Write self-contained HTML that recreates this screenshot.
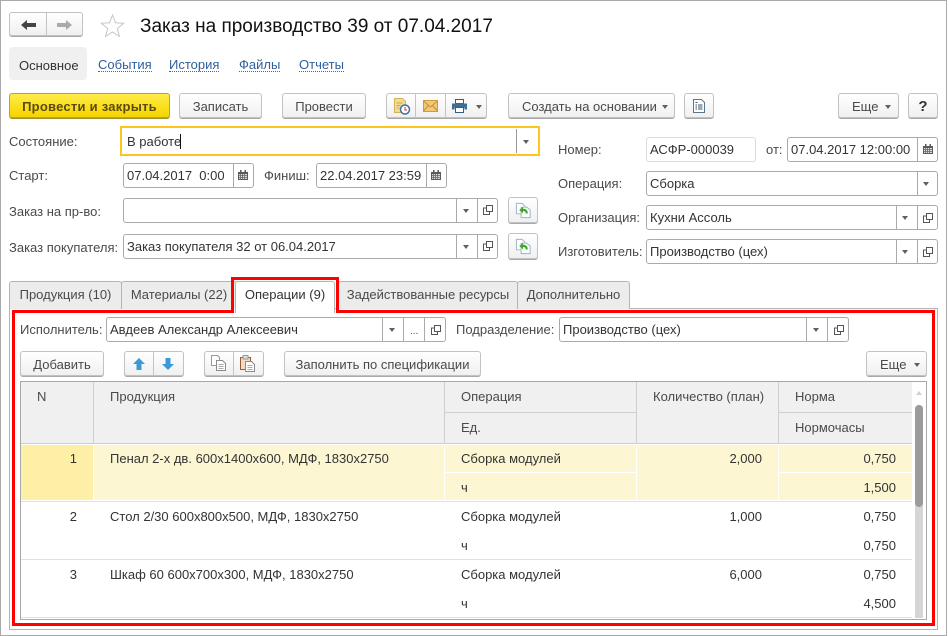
<!DOCTYPE html>
<html lang="ru"><head><meta charset="utf-8"><title>Заказ</title>
<style>
html,body{margin:0;padding:0;background:#fff}
#p{position:relative;width:949px;height:636px;overflow:hidden;background:#fff;font:13px/16px "Liberation Sans",Arial,sans-serif;color:#333}
#p div,#p svg{position:absolute;box-sizing:border-box}
.x{white-space:nowrap;font-size:13px;line-height:16px;height:16px;color:#333;margin-top:1px}
.l{color:#4a4a4a}
.lk{color:#2f5f9f;border-bottom:1px dotted #3a6aa8;height:14px;line-height:14px}
.b{background:linear-gradient(#fff,#f6f6f6 60%,#f0f0f0);border:1px solid #c2c2c2;border-radius:3px;box-shadow:0 1px 0 #a8a8a8;color:#4a4a4a;text-align:center;line-height:25px;font-size:13px;white-space:nowrap}
.f{background:#fff;border:1px solid #aaa;border-radius:3px}
.s{width:1px;background:#aaa}
.sb{width:1px;background:#c4c4c4}
.t{width:0;height:0;border-left:3.5px solid transparent;border-right:3.5px solid transparent;border-top:4px solid #606060}
.h{background:#f0f0f0}
.r{text-align:right}
.tab{background:#ececec;border:1px solid #b4b4b4;border-bottom:0;border-radius:3px 3px 0 0;text-align:center;line-height:26px;color:#4a4a4a;white-space:nowrap;font-size:13px}
</style></head><body><div id="p">
<svg width="0" height="0" style="left:0;top:0"><defs>
<symbol id="op" viewBox="0 0 10 10"><path d="M3.500 .5h6v6h-6z M3.500 3H.5v6.500h6V6.500" fill="none" stroke="#555" stroke-width="1"/></symbol>
<symbol id="cal" viewBox="0 0 10 10"><path d="M0 2h10v8H0z" fill="#5a5a5a"/><path d="M2 0h1.500v2H2zM6.500 0H8v2H6.500z" fill="#5a5a5a"/><path d="M1 4h8v5H1z" fill="#ddd"/><path d="M2.500 4v5M4.500 4v5M6.500 4v5M1 5.500h8M1 7.500h8" stroke="#666" stroke-width=".8"/></symbol>
<symbol id="bk" viewBox="0 0 20 20"><path d="M2.500 2.500h6l3 3v8h-9z" fill="#fff" stroke="#9db2c0"/><path d="M7.500 6.500h6l3.500 3v8h-9.500z" fill="#fff" stroke="#9db2c0"/><path d="M5.500 9.500l4-3.500v2.200c3 0 5 1.300 5 5h-2.200c0-1.800-.9-2.500-2.800-2.500v2.300z" fill="#3fa82e"/></symbol>
</defs></svg>

<!-- window border -->
<div style="left:0;top:0;width:947px;height:636px;border:1px solid #a9a9a9"></div>

<!-- nav -->
<div class="b" style="left:9px;top:12px;width:74px;height:24px"></div>
<div class="sb" style="left:46px;top:13px;height:22px"></div>
<svg style="left:21px;top:20px" width="15" height="10" viewBox="0 0 15 10"><path d="M6 0v3h9v4H6v3L0 5z" fill="#444"/></svg>
<svg style="left:57px;top:20px" width="15" height="10" viewBox="0 0 15 10"><path d="M9 0v3H0v4h9v3l6-5z" fill="#aaa"/></svg>
<svg style="left:100px;top:14px" width="25" height="23" viewBox="0 0 25 23"><path d="M12.500 1l3 7.800 8.200.5-6.400 5.200 2.200 8-7-4.500-7 4.500 2.200-8L1.300 9.300l8.200-.5z" fill="#fff" stroke="#c6c6c6"/></svg>
<div class="x" style="left:140px;top:14px;margin-top:2px;font-size:19px;line-height:22px;height:22px;color:#111">Заказ на производство 39 от 07.04.2017</div>

<!-- top tabs -->
<div style="left:9px;top:47px;width:78px;height:33px;background:#f0f0f0;border-radius:4px"></div>
<div class="x" style="left:19px;top:57px;color:#333">Основное</div>
<div class="x lk" style="left:98px;top:57px">События</div>
<div class="x lk" style="left:169px;top:57px">История</div>
<div class="x lk" style="left:239px;top:57px">Файлы</div>
<div class="x lk" style="left:299px;top:57px">Отчеты</div>

<!-- command bar -->
<div class="b" style="left:9px;top:93px;width:161px;height:25px;background:linear-gradient(#ffec4a,#fbe020 50%,#f5d400);border-color:#b5a240;box-shadow:0 1px 0 #a39030;color:#5a4a12;font-weight:bold;letter-spacing:.25px">Провести и закрыть</div>
<div class="b" style="left:179px;top:93px;width:83px;height:25px">Записать</div>
<div class="b" style="left:282px;top:93px;width:84px;height:25px">Провести</div>
<div class="b" style="left:386px;top:93px;width:101px;height:25px"></div>
<div class="sb" style="left:415px;top:94px;height:23px"></div>
<div class="sb" style="left:445px;top:94px;height:23px"></div>
<svg style="left:393px;top:98px" width="18" height="17" viewBox="0 0 18 17"><path d="M1.500 .5h8l3 3v11h-11z" fill="#f2dc94" stroke="#d4b45a"/><path d="M3.500 5h6M3.500 7.500h4M3.500 10h3" stroke="#c9a850"/><circle cx="12" cy="11.500" r="4.500" fill="#fff" stroke="#3d6fa8" stroke-width="1.500"/><path d="M12 9v3h2" stroke="#d04030" fill="none"/></svg>
<svg style="left:423px;top:100px" width="15" height="12" viewBox="0 0 15 12"><path d="M.5 .5h14v11H.5z" fill="#f3c877" stroke="#cf9a3e"/><path d="M.5 1l7 6 7-6M.5 11l5-5.500M14.500 11l-5-5.500" fill="none" stroke="#c78f35"/></svg>
<svg style="left:452px;top:99px" width="15" height="14" viewBox="0 0 15 14"><path d="M3.500 .5h8v4h-8z" fill="#fff" stroke="#2f5f85"/><path d="M0 4.500h15v6h-2.500v-2h-10v2H0z" fill="#3d6f95"/><path d="M3.500 8.500h8v5h-8z" fill="#fff" stroke="#2f5f85"/></svg>
<div class="t" style="left:476px;top:105px"></div>
<div class="b" style="left:508px;top:93px;width:167px;height:25px;text-align:left;padding-left:13px">Создать на основании</div>
<div class="t" style="left:662px;top:105px"></div>
<div class="b" style="left:684px;top:93px;width:30px;height:25px"></div>
<svg style="left:693px;top:99px" width="12" height="14" viewBox="0 0 12 14"><path d="M.5 .5h8l3 3v10H.5z" fill="#fff" stroke="#5d7488"/><path d="M2.500 3.500h2M2.500 6h1.500M5 6h4.500M2.500 8h1.500M5 8h4.500M2.500 10h1.500M5 10h4.500" stroke="#33536e"/></svg>
<div class="b" style="left:838px;top:93px;width:61px;height:25px;text-align:left;padding-left:13px">Еще</div>
<div class="t" style="left:885px;top:105px"></div>
<div class="b" style="left:908px;top:93px;width:30px;height:25px;color:#333;font-weight:bold;font-size:15px">?</div>

<!-- left fields -->
<div class="x l" style="left:9px;top:133px">Состояние:</div>
<div style="left:120px;top:126px;width:420px;height:30px;border:2px solid #fcc61c;background:#fff"></div>
<div class="x" style="left:127px;top:133px">В работе</div>
<div style="left:180px;top:134px;width:1px;height:15px;background:#111"></div>
<div class="s" style="left:516px;top:129px;height:24px;background:#999"></div>
<div class="t" style="left:523px;top:140px"></div>

<div class="x l" style="left:9px;top:167px">Старт:</div>
<div class="f" style="left:123px;top:163px;width:131px;height:25px"></div>
<div class="s" style="left:233px;top:164px;height:23px"></div>
<div class="x" style="left:127px;top:167px">07.04.2017&nbsp; 0:00</div>
<svg style="left:238px;top:170px" width="10" height="10"><use href="#cal"/></svg>
<div class="x l" style="left:264px;top:167px">Финиш:</div>
<div class="f" style="left:316px;top:163px;width:131px;height:25px"></div>
<div class="s" style="left:426px;top:164px;height:23px"></div>
<div class="x" style="left:320px;top:167px">22.04.2017 23:59</div>
<svg style="left:431px;top:170px" width="10" height="10"><use href="#cal"/></svg>

<div class="x l" style="left:9px;top:203px">Заказ на пр-во:</div>
<div class="f" style="left:123px;top:198px;width:375px;height:25px"></div>
<div class="s" style="left:456px;top:199px;height:23px"></div>
<div class="s" style="left:477px;top:199px;height:23px"></div>
<div class="t" style="left:463px;top:209px"></div>
<svg style="left:483px;top:205px" width="10" height="10"><use href="#op"/></svg>
<div class="b" style="left:508px;top:197px;width:30px;height:26px"></div>
<svg style="left:514px;top:201px" width="19" height="19"><use href="#bk"/></svg>

<div class="x l" style="left:9px;top:239px">Заказ покупателя:</div>
<div class="f" style="left:123px;top:234px;width:375px;height:25px"></div>
<div class="s" style="left:456px;top:235px;height:23px"></div>
<div class="s" style="left:477px;top:235px;height:23px"></div>
<div class="x" style="left:127px;top:238px">Заказ покупателя 32 от 06.04.2017</div>
<div class="t" style="left:463px;top:245px"></div>
<svg style="left:483px;top:241px" width="10" height="10"><use href="#op"/></svg>
<div class="b" style="left:508px;top:233px;width:30px;height:26px"></div>
<svg style="left:514px;top:237px" width="19" height="19"><use href="#bk"/></svg>

<!-- right fields -->
<div class="x l" style="left:558px;top:141px">Номер:</div>
<div style="left:646px;top:137px;width:110px;height:25px;border:1px solid #ddd;border-radius:3px"></div>
<div class="x" style="left:650px;top:141px">АСФР-000039</div>
<div class="x l" style="left:766px;top:141px">от:</div>
<div class="f" style="left:787px;top:137px;width:151px;height:25px"></div>
<div class="s" style="left:917px;top:138px;height:23px"></div>
<div class="x" style="left:791px;top:141px">07.04.2017 12:00:00</div>
<svg style="left:923px;top:144px" width="10" height="10"><use href="#cal"/></svg>

<div class="x l" style="left:558px;top:175px">Операция:</div>
<div class="f" style="left:646px;top:171px;width:292px;height:25px"></div>
<div class="s" style="left:917px;top:172px;height:23px"></div>
<div class="x" style="left:650px;top:175px">Сборка</div>
<div class="t" style="left:923px;top:182px"></div>

<div class="x l" style="left:558px;top:209px">Организация:</div>
<div class="f" style="left:646px;top:205px;width:292px;height:25px"></div>
<div class="s" style="left:896px;top:206px;height:23px"></div>
<div class="s" style="left:917px;top:206px;height:23px"></div>
<div class="x" style="left:650px;top:209px">Кухни Ассоль</div>
<div class="t" style="left:902px;top:216px"></div>
<svg style="left:923px;top:213px" width="10" height="10"><use href="#op"/></svg>

<div class="x l" style="left:558px;top:243px">Изготовитель:</div>
<div class="f" style="left:646px;top:239px;width:292px;height:25px"></div>
<div class="s" style="left:896px;top:240px;height:23px"></div>
<div class="s" style="left:917px;top:240px;height:23px"></div>
<div class="x" style="left:650px;top:243px">Производство (цех)</div>
<div class="t" style="left:902px;top:250px"></div>
<svg style="left:923px;top:247px" width="10" height="10"><use href="#op"/></svg>

<!-- tabs panel -->
<div style="left:9px;top:308px;width:929px;height:322px;border:1px solid #b4b4b4;background:#fff"></div>
<div class="tab" style="left:9px;top:281px;width:113px;height:28px">Продукция (10)</div>
<div class="tab" style="left:121px;top:281px;width:116px;height:28px">Материалы (22)</div>
<div class="tab" style="left:338px;top:281px;width:180px;height:28px">Задействованные ресурсы</div>
<div class="tab" style="left:517px;top:281px;width:113px;height:28px">Дополнительно</div>
<div class="tab" style="left:235px;top:281px;width:100px;height:32px;background:#fff;color:#333">Операции (9)</div>

<!-- red outline -->
<svg style="left:0;top:0" width="949" height="636"><path d="M13.500 311.500H232.500V278.500H337.500V311.500H933.500V624.500H13.500Z" fill="none" stroke="#f00" stroke-width="3"/></svg>

<!-- executor row -->
<div class="x l" style="left:20px;top:321px">Исполнитель:</div>
<div class="f" style="left:106px;top:317px;width:340px;height:25px"></div>
<div class="s" style="left:382px;top:318px;height:23px"></div>
<div class="s" style="left:403px;top:318px;height:23px"></div>
<div class="s" style="left:424px;top:318px;height:23px"></div>
<div class="x" style="left:110px;top:321px">Авдеев Александр Алексеевич</div>
<div class="t" style="left:389px;top:328px"></div>
<div class="x l" style="left:410px;top:323px;font-size:10px">...</div>
<svg style="left:431px;top:325px" width="10" height="10"><use href="#op"/></svg>
<div class="x l" style="left:456px;top:321px">Подразделение:</div>
<div class="f" style="left:559px;top:317px;width:290px;height:25px"></div>
<div class="s" style="left:806px;top:318px;height:23px"></div>
<div class="s" style="left:827px;top:318px;height:23px"></div>
<div class="x" style="left:563px;top:321px">Производство (цех)</div>
<div class="t" style="left:813px;top:328px"></div>
<svg style="left:834px;top:325px" width="10" height="10"><use href="#op"/></svg>

<!-- table toolbar -->
<div class="b" style="left:20px;top:351px;width:84px;height:25px">Добавить</div>
<div class="b" style="left:124px;top:351px;width:60px;height:25px"></div>
<div class="sb" style="left:153px;top:352px;height:23px"></div>
<svg style="left:133px;top:358px" width="12" height="12" viewBox="0 0 12 12"><path d="M6 0l6 6H8.500v6h-5V6H0z" fill="#3b9ad6"/></svg>
<svg style="left:162px;top:358px" width="12" height="12" viewBox="0 0 12 12"><path d="M6 12l6-6H8.500V0h-5v6H0z" fill="#3b9ad6"/></svg>
<div class="b" style="left:204px;top:351px;width:60px;height:25px"></div>
<div class="sb" style="left:233px;top:352px;height:23px"></div>
<svg style="left:211px;top:355px" width="16" height="16" viewBox="0 0 16 16"><path d="M.5 .5h6l2 2v8h-8z" fill="#fff" stroke="#9a9a9a"/><path d="M5.500 5.500h6l3 3v7h-9z" fill="#fff" stroke="#8a8a8a"/><path d="M7.500 9.500h5M7.500 11.500h5M7.500 13.500h5" stroke="#aaa"/></svg>
<svg style="left:240px;top:355px" width="16" height="17" viewBox="0 0 16 17"><path d="M.5 2.500h10v12H.5z" fill="#f0ddc8" stroke="#9a5a3a"/><path d="M3 .5h5v3.500H3z" fill="#ddd" stroke="#999"/><path d="M5.500 6.500h6l3 3v7h-9z" fill="#fff" stroke="#8a8a8a"/><path d="M7.500 10.500h5M7.500 12.500h5M7.500 14.500h5" stroke="#aaa"/></svg>
<div class="b" style="left:284px;top:351px;width:197px;height:25px">Заполнить по спецификации</div>
<div class="b" style="left:866px;top:351px;width:61px;height:25px;text-align:left;padding-left:13px">Еще</div>
<div class="t" style="left:914px;top:363px"></div>

<!-- table -->
<div style="left:20px;top:381px;width:907px;height:239px;border:1px solid #a8a8a8;background:#fff"></div>
<div class="h" style="left:21px;top:382px;width:72px;height:61px"></div>
<div class="h" style="left:94px;top:382px;width:350px;height:61px"></div>
<div class="h" style="left:445px;top:382px;width:191px;height:30px"></div>
<div class="h" style="left:445px;top:413px;width:191px;height:30px"></div>
<div class="h" style="left:637px;top:382px;width:141px;height:61px"></div>
<div class="h" style="left:779px;top:382px;width:133px;height:30px"></div>
<div class="h" style="left:779px;top:413px;width:133px;height:30px"></div>
<div style="left:21px;top:443px;width:891px;height:1px;background:#cfcfcf"></div>
<div style="left:93px;top:382px;width:1px;height:61px;background:#cfcfcf"></div>
<div style="left:444px;top:382px;width:1px;height:61px;background:#cfcfcf"></div>
<div style="left:636px;top:382px;width:1px;height:61px;background:#cfcfcf"></div>
<div style="left:778px;top:382px;width:1px;height:61px;background:#cfcfcf"></div>
<div style="left:445px;top:412px;width:191px;height:1px;background:#cfcfcf"></div>
<div style="left:779px;top:412px;width:133px;height:1px;background:#cfcfcf"></div>
<div class="x l" style="left:37px;top:388px">N</div>
<div class="x l" style="left:110px;top:388px">Продукция</div>
<div class="x l" style="left:461px;top:388px">Операция</div>
<div class="x l" style="left:461px;top:419px">Ед.</div>
<div class="x l" style="left:653px;top:388px">Количество (план)</div>
<div class="x l" style="left:795px;top:388px">Норма</div>
<div class="x l" style="left:795px;top:419px">Нормочасы</div>

<!-- rows -->
<div style="left:21px;top:445px;width:72px;height:55px;background:#fdf0a6"></div>
<div style="left:94px;top:445px;width:350px;height:55px;background:#fdf6d3"></div>
<div style="left:445px;top:445px;width:191px;height:27px;background:#fdf6d3"></div>
<div style="left:445px;top:473px;width:191px;height:27px;background:#fdf6d3"></div>
<div style="left:637px;top:445px;width:141px;height:55px;background:#fdf6d3"></div>
<div style="left:779px;top:445px;width:133px;height:27px;background:#fdf6d3"></div>
<div style="left:779px;top:473px;width:133px;height:27px;background:#fdf6d3"></div>
<div style="left:21px;top:501px;width:891px;height:1px;background:#e0e0e0"></div>
<div style="left:21px;top:559px;width:891px;height:1px;background:#e0e0e0"></div>
<div style="left:21px;top:617px;width:891px;height:1px;background:#e0e0e0"></div>

<div class="x r" style="left:37px;width:40px;top:450px">1</div>
<div class="x" style="left:110px;top:450px">Пенал 2-х дв. 600х1400х600, МДФ, 1830х2750</div>
<div class="x" style="left:461px;top:450px">Сборка модулей</div>
<div class="x" style="left:461px;top:479px">ч</div>
<div class="x r" style="left:682px;width:80px;top:450px">2,000</div>
<div class="x r" style="left:816px;width:80px;top:450px">0,750</div>
<div class="x r" style="left:816px;width:80px;top:479px">1,500</div>

<div class="x r" style="left:37px;width:40px;top:508px">2</div>
<div class="x" style="left:110px;top:508px">Стол 2/30 600х800х500, МДФ, 1830х2750</div>
<div class="x" style="left:461px;top:508px">Сборка модулей</div>
<div class="x" style="left:461px;top:537px">ч</div>
<div class="x r" style="left:682px;width:80px;top:508px">1,000</div>
<div class="x r" style="left:816px;width:80px;top:508px">0,750</div>
<div class="x r" style="left:816px;width:80px;top:537px">0,750</div>

<div class="x r" style="left:37px;width:40px;top:566px">3</div>
<div class="x" style="left:110px;top:566px">Шкаф 60 600х700х300, МДФ, 1830х2750</div>
<div class="x" style="left:461px;top:566px">Сборка модулей</div>
<div class="x" style="left:461px;top:595px">ч</div>
<div class="x r" style="left:682px;width:80px;top:566px">6,000</div>
<div class="x r" style="left:816px;width:80px;top:566px">0,750</div>
<div class="x r" style="left:816px;width:80px;top:595px">4,500</div>

<!-- scrollbar -->
<div style="left:915px;top:405px;width:8px;height:213px;background:#d6d6d6;border-radius:4px 4px 0 0"></div>
<div style="left:915px;top:405px;width:8px;height:102px;background:#9b9b9b;border-radius:4px"></div>
<div style="left:916px;top:391px;width:0;height:0;border-left:3.500px solid transparent;border-right:3.500px solid transparent;border-bottom:4px solid #d0d0d0"></div>
</div></body></html>
